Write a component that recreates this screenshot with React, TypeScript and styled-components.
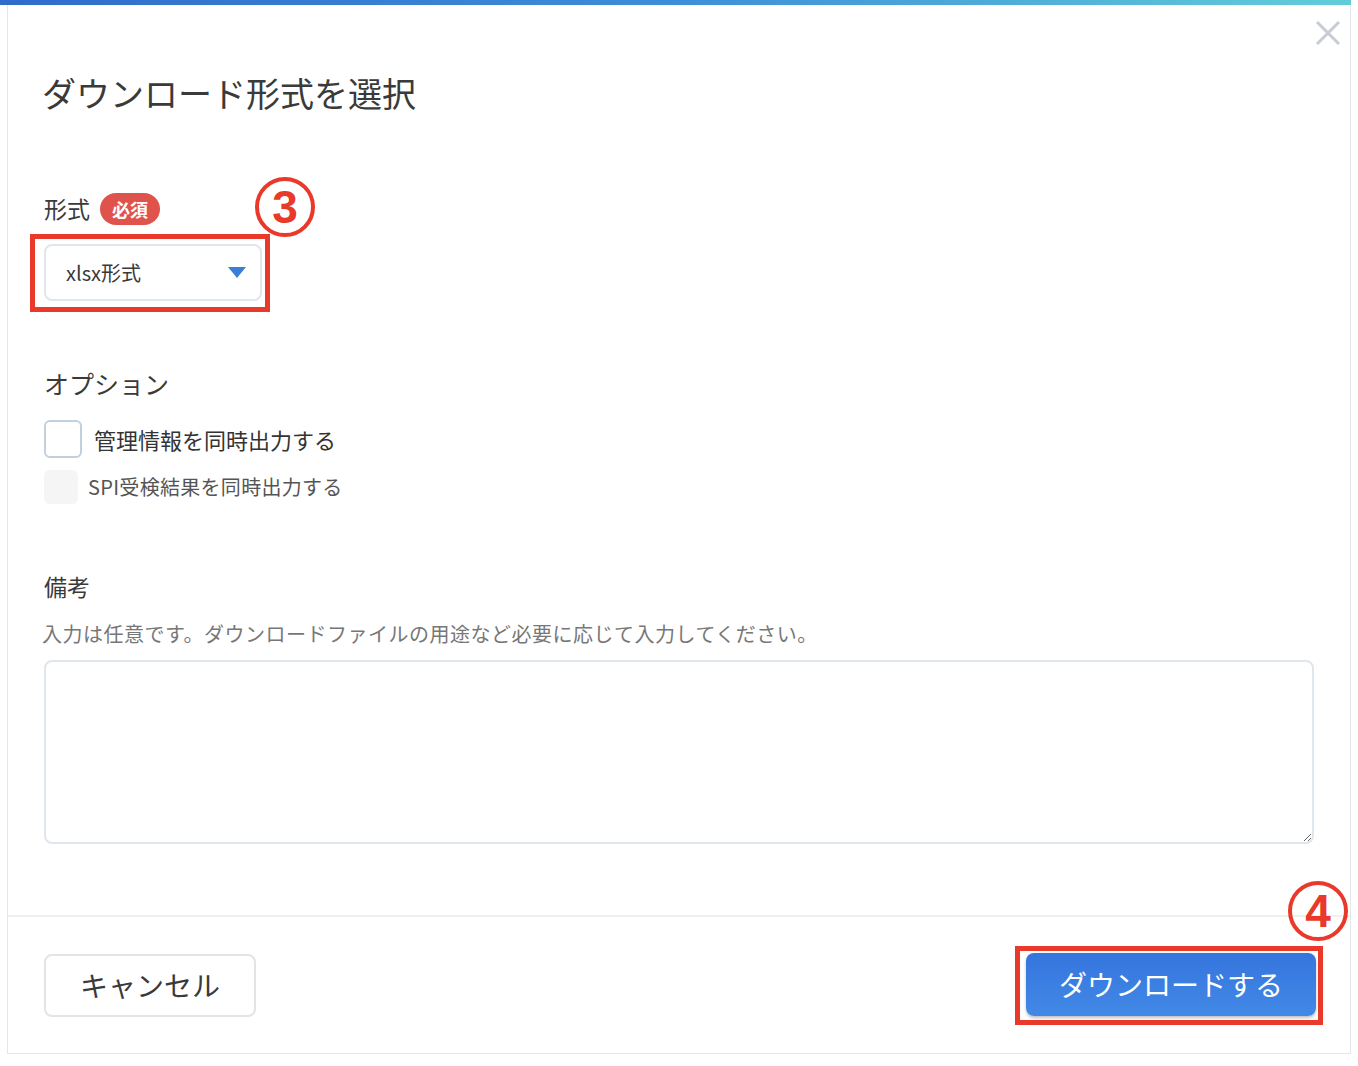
import React from "react";
import styled, { createGlobalStyle } from "styled-components";

const Global = createGlobalStyle`
  html, body { margin: 0; padding: 0; background: #fff; }
  body { font-family: "Noto Sans CJK JP", "Noto Sans", sans-serif; color: #333; }
  * { box-sizing: border-box; }
`;

const Page = styled.div`
  width: 1351px;
  height: 1066px;
  display: flex;
  flex-direction: column;
`;

const TopBar = styled.div`
  height: 5px;
  background: linear-gradient(90deg, #2f6ccc 0%, #3d8ed8 50%, #62cdd9 100%);
`;

const Modal = styled.div`
  margin-left: 7px;
  height: 1049px;
  border: 1px solid #e6e6e6;
  border-top: none;
  display: flex;
  flex-direction: column;
  position: relative;
`;

const Close = styled.button`
  position: absolute;
  top: 11px;
  right: 5px;
  width: 34px;
  height: 34px;
  border: none;
  background: none;
  padding: 0;
  cursor: pointer;
  display: flex;
  align-items: center;
  justify-content: center;
`;

const Body = styled.div`
  padding: 66px 36px 0 36px;
  display: flex;
  flex-direction: column;
  flex: 1;
`;

const Title = styled.h1`
  margin: 0 0 0 -2px;
  font-size: 34px;
  font-weight: 400;
  line-height: 44px;
  color: #3a3a3a;
`;

const Section = styled.div<{ $top: number }>`
  margin-top: ${(p) => p.$top}px;
  display: flex;
  flex-direction: column;
`;

const LabelRow = styled.div`
  display: flex;
  align-items: center;
  gap: 10px;
  position: relative;
`;

const Label = styled.div<{ $size?: number }>`
  font-size: ${(p) => p.$size ?? 23}px;
  line-height: 1.3;
  color: #3a3a3a;
`;

const Badge = styled.span`
  background: #e0534d;
  color: #fff;
  font-size: 18px;
  font-weight: 700;
  line-height: 32px;
  height: 32px;
  padding: 0 12px;
  border-radius: 16px;
`;

const Marker = styled.span`
  position: absolute;
  width: 60px;
  height: 60px;
  border: 4px solid #e8392a;
  border-radius: 50%;
  color: #e8392a;
  font-family: "Liberation Sans", Arial, sans-serif;
  font-weight: 700;
  font-size: 46px;
  line-height: 52px;
  text-align: center;
`;

const HighlightRow = styled.div`
  margin: 9px 0 0 -14px;
  display: flex;
`;

const Highlight = styled.div`
  border: 5px solid #e8392a;
  display: inline-flex;
  padding: 5px 3px 6px 9px;
`;

const SelectBox = styled.div`
  width: 218px;
  height: 57px;
  border: 2px solid #dfe6ee;
  border-radius: 8px;
  display: flex;
  align-items: center;
  justify-content: space-between;
  padding: 0 14px 0 20px;
  font-size: 20px;
  color: #3a3a3a;
  background: #fff;
`;

const Options = styled.div`
  display: flex;
  flex-direction: column;
  gap: 12px;
  margin-top: 20px;
`;

const CheckRow = styled.label<{ $disabled?: boolean }>`
  display: flex;
  align-items: center;
  gap: ${(p) => (p.$disabled ? 10 : 12)}px;
  font-size: ${(p) => (p.$disabled ? 20 : 22)}px;
  color: ${(p) => (p.$disabled ? "#555" : "#333")};
  letter-spacing: ${(p) => (p.$disabled ? "0.3px" : "0")};
`;

const Box = styled.span<{ $disabled?: boolean }>`
  width: ${(p) => (p.$disabled ? 34 : 38)}px;
  height: ${(p) => (p.$disabled ? 34 : 38)}px;
  border-radius: 6px;
  border: ${(p) => (p.$disabled ? "none" : "2px solid #c2d0de")};
  background: ${(p) => (p.$disabled ? "#f5f5f5" : "#fff")};
  flex: none;
`;

const Help = styled.div`
  margin-top: 18px;
  font-size: 20px;
  color: #777;
  letter-spacing: 0.5px;
  margin-left: -2px;
`;

const TextArea = styled.textarea`
  margin-top: 12px;
  width: 1270px;
  height: 184px;
  border: 2px solid #dfe6ee;
  border-radius: 8px;
  resize: both;
  font-family: inherit;
  font-size: 18px;
  outline: none;
`;

const Footer = styled.div`
  border-top: 2px solid #f0f0f0;
  height: 138px;
  display: flex;
  align-items: center;
  justify-content: space-between;
  padding: 0 27px 0 36px;
  position: relative;
`;

const CancelButton = styled.button`
  width: 212px;
  height: 63px;
  border: 2px solid #e4e4e4;
  border-radius: 8px;
  background: #fff;
  font-family: inherit;
  font-size: 28px;
  color: #3a3a3a;
`;

const PrimaryWrap = styled.div`
  border: 5px solid #e8392a;
  padding: 2px 2px 4px 6px;
  display: flex;
`;

const PrimaryButton = styled.button`
  width: 290px;
  height: 63px;
  border: none;
  border-radius: 8px;
  background: linear-gradient(180deg, #3575de 0%, #4289e6 100%);
  box-shadow: 0 2px 3px rgba(0, 0, 0, 0.25);
  color: #fff;
  font-family: inherit;
  font-size: 28px;
`;

export default function App() {
  return (
    <>
      <Global />
      <Page>
        <TopBar />
        <Modal>
          <Close aria-label="close">
            <svg width="26" height="26" viewBox="0 0 26 26">
              <path d="M2 2 L24 24 M24 2 L2 24" stroke="#c6ccd4" strokeWidth="3" />
            </svg>
          </Close>
          <Body>
            <Title>ダウンロード形式を選択</Title>
            <Section $top={78}>
              <LabelRow>
                <Label>形式</Label>
                <Badge>必須</Badge>
                <Marker style={{ left: 211, top: -16 }}>3</Marker>
              </LabelRow>
              <HighlightRow>
                <Highlight>
                  <SelectBox>
                    <span>xlsx形式</span>
                    <svg width="18" height="11" viewBox="0 0 18 11">
                      <path d="M0 0 H18 L9 11 Z" fill="#3b7ed8" />
                    </svg>
                  </SelectBox>
                </Highlight>
              </HighlightRow>
            </Section>
            <Section $top={55}>
              <Label $size={25}>オプション</Label>
              <Options>
                <CheckRow>
                  <Box />
                  管理情報を同時出力する
                </CheckRow>
                <CheckRow $disabled>
                  <Box $disabled />
                  SPI受検結果を同時出力する
                </CheckRow>
              </Options>
            </Section>
            <Section $top={68}>
              <Label>備考</Label>
              <Help>入力は任意です。ダウンロードファイルの用途など必要に応じて入力してください。</Help>
              <TextArea />
            </Section>
          </Body>
          <Footer>
            <CancelButton>キャンセル</CancelButton>
            <PrimaryWrap>
              <PrimaryButton>ダウンロードする</PrimaryButton>
            </PrimaryWrap>
            <Marker style={{ right: 2, top: -36 }}>4</Marker>
          </Footer>
        </Modal>
      </Page>
    </>
  );
}
